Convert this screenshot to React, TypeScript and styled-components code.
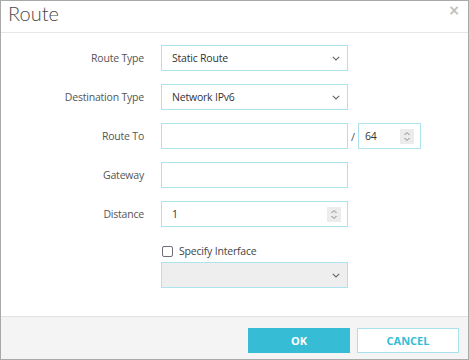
import React from "react";
import styled, { createGlobalStyle } from "styled-components";

const Global = createGlobalStyle`
  html, body { margin: 0; padding: 0; background: #fff; }
  * { box-sizing: border-box; }
`;

const Dialog = styled.div`
  width: 469px;
  height: 360px;
  border: 1px solid #a9a9a9;
  display: flex;
  flex-direction: column;
  background: #fff;
  font-family: "Open Sans", "Noto Sans", sans-serif;
`;

const Header = styled.div`
  height: 32px;
  border-bottom: 1px solid #e6e6e6;
  display: flex;
  align-items: flex-start;
  justify-content: space-between;
  padding: 0 8px 0 7px;
`;

const Title = styled.h1`
  margin: 0;
  font-family: Lato, "Open Sans", sans-serif;
  font-weight: 300;
  font-size: 20px;
  line-height: 24px;
  color: #4a4a4a;
`;

const Close = styled.span`
  font-size: 14px;
  line-height: 14px;
  margin-top: 2px;
  color: #c0c0c0;
  font-weight: 700;
  font-family: "DejaVu Sans", sans-serif;
`;

const Body = styled.div`
  flex: 1;
  padding-top: 12px;
`;

const Form = styled.div`
  display: grid;
  grid-template-columns: 143px 187px auto;
  column-gap: 17px;
  row-gap: 13px;
  align-items: center;
`;

const Label = styled.label`
  text-align: right;
  font-size: 10.5px;
  letter-spacing: -0.2px;
  color: #555;
  grid-column: 1;
`;

const FieldBox = styled.div<{ $disabled?: boolean; $w?: number }>`
  width: ${(p) => (p.$w ? p.$w + "px" : "187px")};
  height: 26px;
  border: 1px solid #ade3ec;
  background: ${(p) => (p.$disabled ? "#eeeeee" : "#fff")};
  display: flex;
  align-items: center;
  justify-content: space-between;
  padding: 0 6px 0 10px;
  font-size: 10.5px;
  letter-spacing: -0.2px;
  color: #333;
`;

const Chevron = () => (
  <svg width="8" height="5" viewBox="0 0 8 5" style={{ marginRight: 1 }}>
    <path d="M0.8 0.8 L4 4 L7.2 0.8" fill="none" stroke="#666" strokeWidth="1.1" />
  </svg>
);

const SpinBox = styled.span`
  width: 14px;
  height: 15px;
  background: #ececec;
  display: flex;
  align-items: center;
  justify-content: center;
`;

const Spinner = () => (
  <SpinBox>
    <svg width="8" height="11" viewBox="0 0 8 11">
      <path d="M1.5 4 L4 1.5 L6.5 4 M1.5 7 L4 9.5 L6.5 7" fill="none" stroke="#888" strokeWidth="1" />
    </svg>
  </SpinBox>
);

const Inline = styled.div`
  display: flex;
  align-items: center;
`;

const Slash = styled.span`
  width: 10px;
  text-align: center;
  font-size: 11px;
  color: #555;
`;

const CheckRow = styled.div`
  grid-column: 2;
  display: flex;
  align-items: center;
  gap: 6px;
  font-size: 10.5px;
  letter-spacing: -0.2px;
  color: #444;
  margin-top: 4px;
  margin-bottom: -9px;
`;

const Check = styled.span`
  width: 11px;
  height: 11px;
  border: 1.5px solid #6f6f7a;
  border-radius: 2px;
  margin-left: 1px;
`;

const Cell = styled.div`
  grid-column: 2 / span 2;
`;

const Footer = styled.div`
  height: 43px;
  border-top: 1px solid #e2e2e2;
  background: #f4f4f4;
  display: flex;
  justify-content: flex-end;
  align-items: flex-start;
  gap: 7px;
  padding: 11px 9px 0 0;
`;

const Button = styled.button<{ $primary?: boolean }>`
  width: 102px;
  height: 25px;
  border: 1px solid ${(p) => (p.$primary ? "#36bdd5" : "#a9e2ec")};
  background: ${(p) => (p.$primary ? "#36bdd5" : "#fff")};
  color: ${(p) => (p.$primary ? "#fff" : "#36bdd5")};
  font-family: "Open Sans", sans-serif;
  font-weight: 700;
  font-size: 11px;
  padding: 0;
`;

export default function App() {
  return (
    <>
      <Global />
      <Dialog>
        <Header>
          <Title>Route</Title>
          <Close>×</Close>
        </Header>
        <Body>
          <Form>
            <Label>Route Type</Label>
            <Cell>
              <FieldBox>
                <span>Static Route</span>
                <Chevron />
              </FieldBox>
            </Cell>

            <Label>Destination Type</Label>
            <Cell>
              <FieldBox>
                <span>Network IPv6</span>
                <Chevron />
              </FieldBox>
            </Cell>

            <Label>Route To</Label>
            <Cell>
              <Inline>
                <FieldBox />
                <Slash>/</Slash>
                <FieldBox $w={63} style={{ paddingLeft: 6 }}>
                  <span>64</span>
                  <Spinner />
                </FieldBox>
              </Inline>
            </Cell>

            <Label>Gateway</Label>
            <Cell>
              <FieldBox />
            </Cell>

            <Label>Distance</Label>
            <Cell>
              <FieldBox>
                <span>1</span>
                <Spinner />
              </FieldBox>
            </Cell>

            <CheckRow>
              <Check />
              <span>Specify Interface</span>
            </CheckRow>
            <Cell>
              <FieldBox $disabled>
                <span />
                <Chevron />
              </FieldBox>
            </Cell>
          </Form>
        </Body>
        <Footer>
          <Button $primary>OK</Button>
          <Button>CANCEL</Button>
        </Footer>
      </Dialog>
    </>
  );
}
